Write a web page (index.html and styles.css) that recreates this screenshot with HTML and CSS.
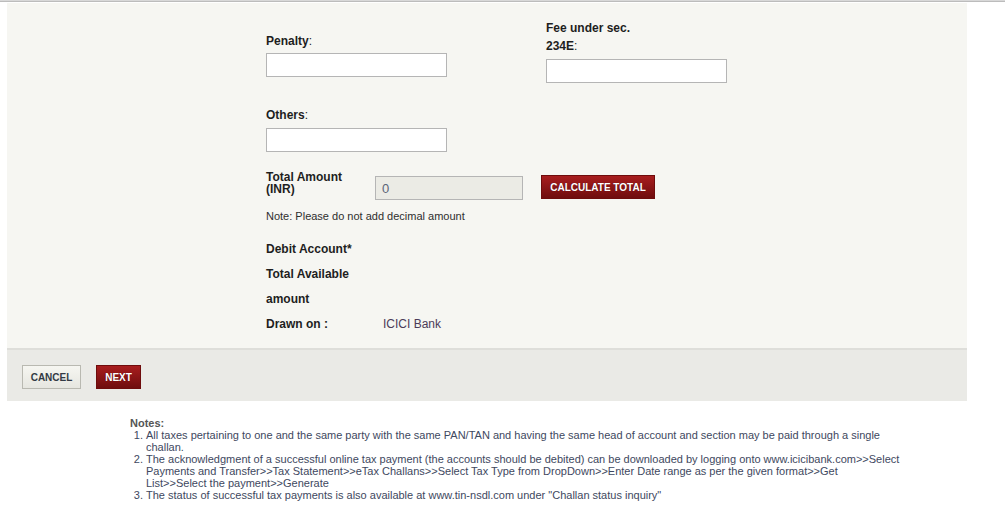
FILE: index.html
```html
<!DOCTYPE html>
<html lang="en">
<head>
<meta charset="utf-8">
<title>Tax Payment</title>
<link rel="stylesheet" href="styles.css">
</head>
<body>
<div class="topline"></div>
<div class="wrap">
  <div class="panel">
    <div class="form">
      <div class="pair">
        <div class="field field-left">
          <div class="label"><b>Penalty</b>:</div>
          <input class="input" type="text">
        </div>
        <div class="field field-right">
          <div class="label"><b>Fee under sec.<br>234E</b>:</div>
          <input class="input" type="text">
        </div>
      </div>
      <div class="field field-others">
        <div class="label"><b>Others</b>:</div>
        <input class="input" type="text">
      </div>
      <div class="total-row">
        <div class="total-label">Total Amount<br>(INR)</div>
        <input class="input input-total" type="text" value="0" disabled>
        <button class="btn-red btn-calc" type="button">CALCULATE TOTAL</button>
      </div>
      <p class="note">Note: Please do not add decimal amount</p>
      <div class="info">
        <div class="info-row"><div class="info-label">Debit Account*</div></div>
        <div class="info-row"><div class="info-label">Total Available amount</div></div>
        <div class="info-row"><div class="info-label">Drawn on :</div><div class="info-value">ICICI Bank</div></div>
      </div>
    </div>
  </div>
  <div class="footer">
    <button class="btn-grey" type="button">CANCEL</button>
    <button class="btn-red btn-next" type="button">NEXT</button>
  </div>
  <div class="notes">
    <div class="notes-title">Notes:</div>
    <ol class="notes-list">
      <li>All taxes pertaining to one and the same party with the same PAN/TAN and having the same head of account and section may be paid through a single challan.</li>
      <li>The acknowledgment of a successful online tax payment (the accounts should be debited) can be downloaded by logging onto www.icicibank.com&gt;&gt;Select Payments and Transfer&gt;&gt;Tax Statement&gt;&gt;eTax Challans&gt;&gt;Select Tax Type from DropDown&gt;&gt;Enter Date range as per the given format&gt;&gt;Get List&gt;&gt;Select the payment&gt;&gt;Generate</li>
      <li>The status of successful tax payments is also available at www.tin-nsdl.com under "Challan status inquiry"</li>
    </ol>
  </div>
</div>
</body>
</html>
```
FILE: styles.css
```css
html, body {
  margin: 0;
  padding: 0;
  background: #ffffff;
  font-family: "Liberation Sans", Arial, sans-serif;
  color: #1e1e1e;
}

.topline {
  height: 1px;
  background: #d8d8d8;
  border-bottom: 1px solid #bcbcbc;
  margin-bottom: 1px;
}

.wrap {
  width: 960px;
  margin-left: 7px;
}

.panel {
  background: #f6f6f2;
  height: 345px;
  box-sizing: border-box;
  padding: 16px 0 0 259px;
}

.pair {
  display: flex;
}

.field {
  display: flex;
  flex-direction: column;
  align-items: flex-start;
}

.field-left {
  width: 280px;
  padding-top: 13px;
}

.field-left .input {
  margin-top: 3px;
}

.label {
  font-size: 12px;
  line-height: 18px;
  color: #1e1e1e;
}

.label b {
  font-weight: bold;
}

.input {
  width: 181px;
  height: 24px;
  box-sizing: border-box;
  border: 1px solid #b5b5b5;
  background: #ffffff;
  margin: 4px 0 0 0;
  padding: 0 6px;
  font-family: "Liberation Sans", Arial, sans-serif;
  font-size: 12px;
}

.field-others {
  margin-top: 23px;
}

.total-row {
  display: flex;
  align-items: flex-start;
  margin-top: 19px;
}

.total-label {
  width: 109px;
  font-size: 12px;
  font-weight: bold;
  line-height: 12px;
  color: #1e1e1e;
}

.input-total {
  width: 148px;
  margin-top: 5px;
  background: #ebebe5;
  color: #5a6478;
  font-size: 13px;
  padding-left: 6px;
}

.btn-red {
  background: linear-gradient(#a81d1e, #6f0d0e);
  border: 1px solid #6e0c0c;
  color: #ffffff;
  font-family: "Liberation Sans", Arial, sans-serif;
  font-weight: bold;
  font-size: 10px;
  height: 24px;
  padding: 0;
  box-sizing: border-box;
  cursor: pointer;
  text-shadow: 0 0 1px rgba(0,0,0,0.4);
}

.btn-calc {
  width: 114px;
  margin: 4px 0 0 18px;
}

.note {
  margin: 9px 0 0 0;
  font-size: 11px;
  line-height: 14px;
  color: #2e2e2e;
}

.info {
  margin-top: 14px;
}

.info-row {
  display: flex;
}

.info-label {
  width: 117px;
  font-size: 12px;
  font-weight: bold;
  line-height: 25px;
  color: #1e1e1e;
}

.info-value {
  font-size: 12px;
  line-height: 25px;
  color: #4b3b58;
}

.footer {
  background: #eaeae6;
  border-top: 2px solid #dededa;
  height: 53px;
  box-sizing: border-box;
  display: flex;
  align-items: flex-start;
  padding: 15px 0 0 15px;
  gap: 15px;
}

.btn-grey {
  width: 59px;
  height: 24px;
  box-sizing: border-box;
  border: 1px solid #b9b9b1;
  background: linear-gradient(#f6f6f1, #e6e6e0);
  color: #333a44;
  font-family: "Liberation Sans", Arial, sans-serif;
  font-weight: bold;
  font-size: 10px;
  padding: 0;
  cursor: pointer;
}

.btn-next {
  width: 45px;
}

.notes {
  padding: 16px 0 0 123px;
  width: 770px;
  font-size: 11px;
  color: #3e4860;
}

.notes-title {
  font-weight: bold;
  color: #555555;
  line-height: 12px;
}

.notes-list {
  margin: 0;
  padding-left: 16px;
  line-height: 12px;
}
```
